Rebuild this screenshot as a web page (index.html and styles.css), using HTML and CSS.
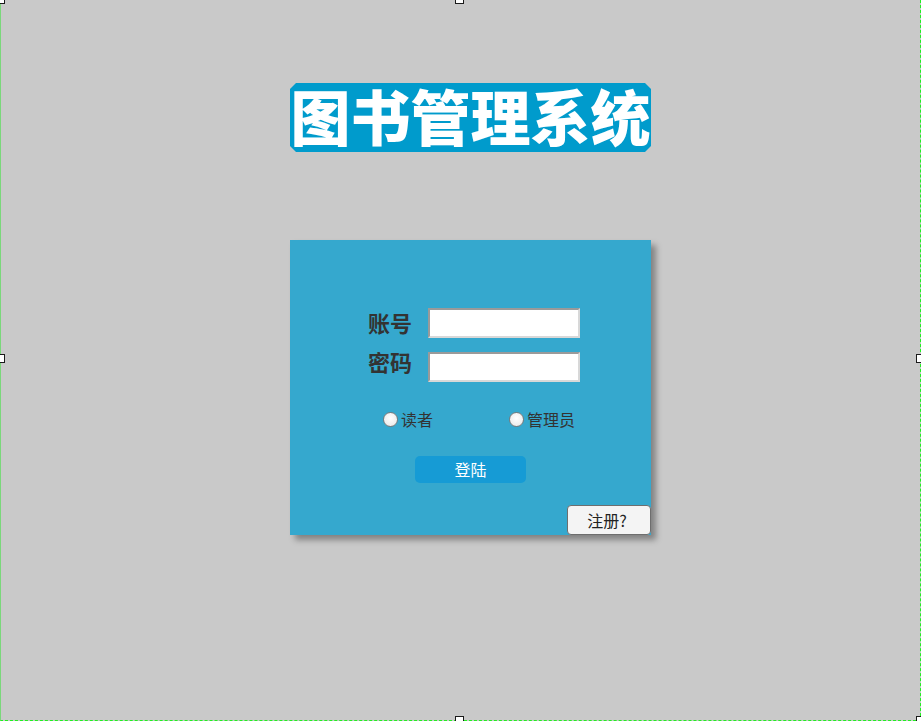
FILE: index.html
```html
<!DOCTYPE html>
<html lang="zh-CN">
<head>
<meta charset="utf-8">
<title>图书管理系统</title>
<link rel="stylesheet" href="styles.css">
</head>
<body>
<div class="frame">
  <h1 class="title">图书管理系统</h1>
  <form class="card">
    <div class="field">
      <label class="label" for="acc">账号</label>
      <input class="input" id="acc" type="text">
    </div>
    <div class="field field-2">
      <label class="label" for="pwd">密码</label>
      <input class="input" id="pwd" type="password">
    </div>
    <div class="roles">
      <label class="role role-reader"><input class="radio" type="radio" name="role">读者</label>
      <label class="role"><input class="radio" type="radio" name="role">管理员</label>
    </div>
    <div class="login-row">
      <button class="login" type="button">登陆</button>
    </div>
    <div class="reg-row">
      <button class="register" type="button">注册?</button>
    </div>
  </form>
  <span class="handle h-tl"></span>
  <span class="handle h-tm"></span>
  <span class="handle h-ml"></span>
  <span class="handle h-mr"></span>
  <span class="handle h-bm"></span>
  <span class="handle h-br"></span>
</div>
</body>
</html>
```
FILE: styles.css
```css
html, body {
  margin: 0;
  padding: 0;
}
body {
  background: #c9c9c9;
  font-family: "Noto Sans CJK SC", "Noto Sans", sans-serif;
  overflow: hidden;
}
.frame {
  position: relative;
  width: 921px;
  height: 721px;
  box-sizing: border-box;
  border-left: 1px solid #7ad87a;
  border-right: 1px dashed #22ee22;
  border-bottom: 1px dashed #22ee22;
  padding-top: 83px;
}
.title {
  width: 361px;
  height: 69px;
  margin: 0 auto 0 289px;
  background: #009bcc;
  color: #ffffff;
  font-size: 60px;
  font-weight: 900;
  line-height: 63px;
  text-align: center;
  white-space: nowrap;
  letter-spacing: 0;
  clip-path: polygon(6px 0, calc(100% - 6px) 0, 100% 6px, 100% calc(100% - 6px), calc(100% - 6px) 100%, 6px 100%, 0 calc(100% - 6px), 0 6px);
}
.card {
  width: 361px;
  height: 295px;
  margin: 88px 0 0 289px;
  box-sizing: border-box;
  background: #35a8ce;
  box-shadow: 5px 5px 6px rgba(0, 0, 0, 0.35);
  padding-top: 68px;
  display: flex;
  flex-direction: column;
}
.field {
  display: flex;
  align-items: center;
  gap: 15px;
  padding-left: 78px;
  height: 30px;
}
.field-2 {
  margin-top: 14px;
}
.label {
  font-size: 22px;
  font-weight: 700;
  color: #333333;
  width: 45px;
  line-height: 30px;
  margin-bottom: 3px;
}
.field-2 .label {
  margin-bottom: 12px;
}
.input {
  width: 152px;
  height: 30px;
  box-sizing: border-box;
  margin: 0;
  border: 2px solid;
  border-color: #9a9a9a #d8d8d8 #d8d8d8 #9a9a9a;
  background: #ffffff;
  padding: 0 4px;
  outline: none;
}
.roles {
  display: flex;
  align-items: center;
  margin-top: 27px;
  padding-left: 93px;
  height: 20px;
}
.role {
  display: flex;
  align-items: center;
  font-size: 16px;
  color: #333333;
  line-height: 20px;
}
.role-reader {
  width: 126px;
}
.radio {
  -webkit-appearance: none;
  appearance: none;
  width: 15px;
  height: 15px;
  margin: 0 3px 0 0;
  border: 1px solid #7a7a7a;
  border-radius: 50%;
  background: radial-gradient(circle at 50% 40%, #ffffff, #e6e6e6);
  box-sizing: border-box;
}
.login-row {
  display: flex;
  justify-content: center;
  margin-top: 27px;
}
.login {
  width: 111px;
  height: 27px;
  border: none;
  border-radius: 5px;
  background: #169bd5;
  color: #ffffff;
  font-family: "Noto Sans CJK SC", "Noto Sans", sans-serif;
  font-size: 16px;
  line-height: 27px;
  padding: 0;
}
.reg-row {
  display: flex;
  justify-content: flex-end;
  margin-top: auto;
}
.register {
  width: 84px;
  height: 30px;
  box-sizing: border-box;
  border: 1px solid #6e6e6e;
  border-radius: 4px;
  background: #f4f4f4;
  color: #222222;
  font-family: "Noto Sans CJK SC", "Noto Sans", sans-serif;
  font-size: 16px;
  padding: 0 4px 0 0;
  line-height: 28px;
}
.handle {
  position: absolute;
  width: 7px;
  height: 7px;
  border: 1px solid #1a1a1a;
  background: #ffffff;
}
.h-tl { left: -5px; top: -5px; }
.h-tm { left: 454px; top: -5px; }
.h-ml { left: -5px; top: 354px; }
.h-mr { right: -5px; top: 354px; }
.h-bm { left: 454px; bottom: -5px; }
.h-br { right: -5px; bottom: -5px; }
```
